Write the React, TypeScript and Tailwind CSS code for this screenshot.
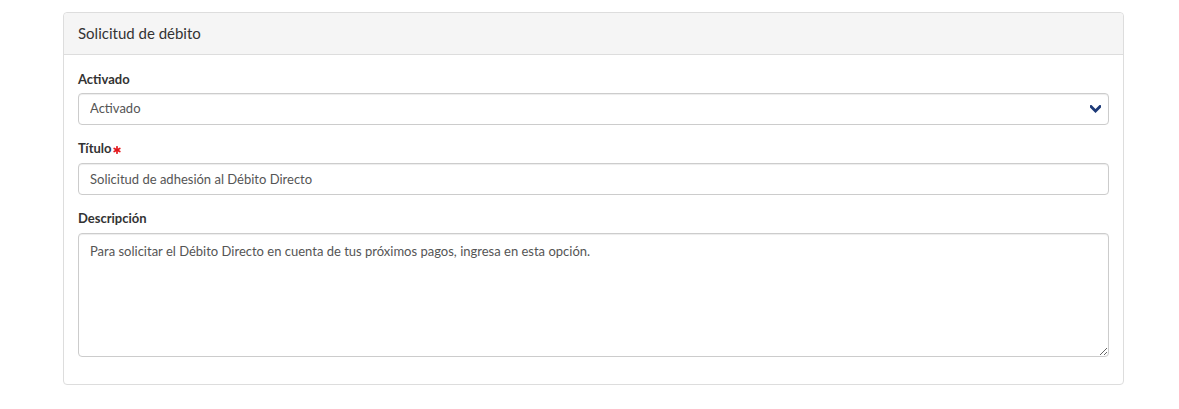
import { useState } from 'react';

export default function App() {
    const [activado, setActivado] = useState('Activado');
    const [titulo, setTitulo] = useState('Solicitud de adhesión al Débito Directo');
    const [descripcion, setDescripcion] = useState(
        'Para solicitar el Débito Directo en cuenta de tus próximos pagos, ingresa en esta opción.'
    );

    return (
        <div className="min-h-[409px] bg-white pt-3 px-[63px] font-['Lato','Liberation_Sans',sans-serif] text-[#333]">
            <div className="w-[1061px] rounded border border-[#ddd] bg-white">
                {/* Panel header */}
                <div className="h-[42px] flex items-center px-[14px] bg-[#f5f5f5] border-b border-[#ddd] rounded-t text-[15px]">
                    Solicitud de débito
                </div>

                <div className="px-[14px] pt-[14px] pb-[27px]">
                    {/* Activado */}
                    <label className="block text-[13px] font-bold leading-5 mb-[4px]">Activado</label>
                    <div className="relative">
                        <select
                            value={activado}
                            onChange={e => setActivado(e.target.value)}
                            className="block w-full h-[32px] appearance-none rounded border border-[#ccc] bg-white pl-[11px] pr-8 text-[13px] text-[#555] outline-none shadow-[inset_0_1px_1px_rgba(0,0,0,0.075)]"
                        >
                            <option>Activado</option>
                            <option>Desactivado</option>
                        </select>
                        <svg
                            className="pointer-events-none absolute right-[8px] top-[12px]"
                            width="11"
                            height="8"
                            viewBox="0 0 11 8"
                        >
                            <path d="M1 1.5 L5.5 6 L10 1.5" fill="none" stroke="#1d3a78" strokeWidth="2.8" strokeLinecap="square" />
                        </svg>
                    </div>

                    {/* Título */}
                    <label className="flex items-center text-[13px] font-bold leading-5 mt-[13px] mb-[5px]">
                        Título
                        <svg className="ml-[1px] mt-[3px]" width="8" height="8" viewBox="0 0 8 8">
                            <g stroke="#e3171c" strokeWidth="1.7" strokeLinecap="round">
                                <line x1="4" y1="0.8" x2="4" y2="7.2" />
                                <line x1="1.2" y1="2.4" x2="6.8" y2="5.6" />
                                <line x1="1.2" y1="5.6" x2="6.8" y2="2.4" />
                            </g>
                        </svg>
                    </label>
                    <input
                        value={titulo}
                        onChange={e => setTitulo(e.target.value)}
                        className="block w-full h-[32px] rounded border border-[#ccc] bg-white px-[11px] text-[13px] text-[#555] outline-none shadow-[inset_0_1px_1px_rgba(0,0,0,0.075)]"
                    />

                    {/* Descripción */}
                    <label className="block text-[13px] font-bold leading-5 mt-[13px] mb-[5px]">Descripción</label>
                    <textarea
                        value={descripcion}
                        onChange={e => setDescripcion(e.target.value)}
                        className="block w-full h-[124px] rounded border border-[#ccc] bg-white px-[11px] py-[7px] text-[13px] leading-5 text-[#555] outline-none shadow-[inset_0_1px_1px_rgba(0,0,0,0.075)]"
                    />
                </div>
            </div>
        </div>
    );
}
